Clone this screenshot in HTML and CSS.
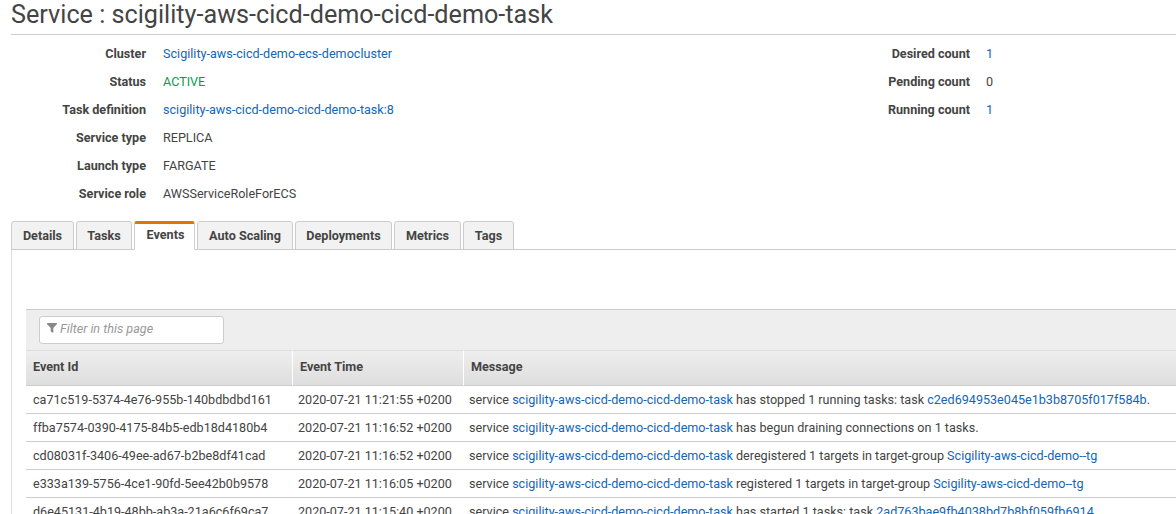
FILE: index.html
```html
<!DOCTYPE html>
<html>
<head>
  <title>Service : scigility-aws-cicd-demo-cicd-demo-task</title>
  <link rel="stylesheet" href="styles.css">
</head>
<body>
  <h1 class="page-title">Service : scigility-aws-cicd-demo-cicd-demo-task</h1>

  <div class="summary">
    <dl class="props props-left">
      <div class="prop"><dt>Cluster</dt><dd><a href="#">Scigility-aws-cicd-demo-ecs-democluster</a></dd></div>
      <div class="prop"><dt>Status</dt><dd class="active">ACTIVE</dd></div>
      <div class="prop"><dt>Task definition</dt><dd><a href="#">scigility-aws-cicd-demo-cicd-demo-task:8</a></dd></div>
      <div class="prop"><dt>Service type</dt><dd>REPLICA</dd></div>
      <div class="prop"><dt>Launch type</dt><dd>FARGATE</dd></div>
      <div class="prop"><dt>Service role</dt><dd>AWSServiceRoleForECS</dd></div>
    </dl>
    <dl class="props props-right">
      <div class="prop"><dt>Desired count</dt><dd><a href="#">1</a></dd></div>
      <div class="prop"><dt>Pending count</dt><dd>0</dd></div>
      <div class="prop"><dt>Running count</dt><dd><a href="#">1</a></dd></div>
    </dl>
  </div>

  <div class="tabs">
    <div class="tab tab-details">Details</div>
    <div class="tab tab-tasks">Tasks</div>
    <div class="tab tab-events active-tab">Events</div>
    <div class="tab tab-scaling">Auto Scaling</div>
    <div class="tab tab-deployments">Deployments</div>
    <div class="tab tab-metrics">Metrics</div>
    <div class="tab tab-tags">Tags</div>
  </div>

  <div class="panel">
    <div class="filter-bar">
      <div class="filter-box">
        <svg class="filter-icon" width="10" height="10" viewBox="0 0 10 10"><path d="M0 0h10v1L6.3 5v5L3.7 8.4V5L0 1z"/></svg>
        <span>Filter in this page</span>
      </div>
    </div>
    <table class="events">
      <thead>
        <tr>
          <th class="col-id">Event Id</th>
          <th class="col-time">Event Time</th>
          <th>Message</th>
        </tr>
      </thead>
      <tbody>
        <tr>
          <td>ca71c519-5374-4e76-955b-140bdbdbd161</td>
          <td>2020-07-21 11:21:55 +0200</td>
          <td>service <a href="#">scigility-aws-cicd-demo-cicd-demo-task</a> has stopped 1 running tasks: task <a href="#">c2ed694953e045e1b3b8705f017f584b</a>.</td>
        </tr>
        <tr>
          <td>ffba7574-0390-4175-84b5-edb18d4180b4</td>
          <td>2020-07-21 11:16:52 +0200</td>
          <td>service <a href="#">scigility-aws-cicd-demo-cicd-demo-task</a> has begun draining connections on 1 tasks.</td>
        </tr>
        <tr>
          <td>cd08031f-3406-49ee-ad67-b2be8df41cad</td>
          <td>2020-07-21 11:16:52 +0200</td>
          <td>service <a href="#">scigility-aws-cicd-demo-cicd-demo-task</a> deregistered 1 targets in target-group <a href="#">Scigility-aws-cicd-demo--tg</a></td>
        </tr>
        <tr>
          <td>e333a139-5756-4ce1-90fd-5ee42b0b9578</td>
          <td>2020-07-21 11:16:05 +0200</td>
          <td>service <a href="#">scigility-aws-cicd-demo-cicd-demo-task</a> registered 1 targets in target-group <a href="#">Scigility-aws-cicd-demo--tg</a></td>
        </tr>
        <tr>
          <td>d6e45131-4b19-48bb-ab3a-21a6c6f69ca7</td>
          <td>2020-07-21 11:15:40 +0200</td>
          <td>service <a href="#">scigility-aws-cicd-demo-cicd-demo-task</a> has started 1 tasks: task <a href="#">2ad763bae9fb4038bd7b8bf059fb6914</a></td>
        </tr>
      </tbody>
    </table>
  </div>
</body>
</html>
```

FILE: styles.css
```css
html, body {
  height: 514px;
  overflow: hidden;
}

body {
  margin: 0;
  padding-left: 11px;
  background-color: #fff;
  color: #444;
  font-family: Roboto, "Liberation Sans", sans-serif;
  font-size: 12.6px;
}

a {
  color: #1166bb;
  text-decoration: none;
}

.page-title {
  margin: 0;
  height: 34px;
  border-bottom: 1px solid #ccc;
  font-size: 25.2px;
  font-weight: 400;
  line-height: 30px;
  color: #444;
}

.summary {
  display: flex;
  height: 186px;
}

.props {
  margin: 5px 0 0;
}

.props-left {
  width: 875px;
}

.prop {
  display: flex;
  height: 28px;
  line-height: 28px;
}

.prop dt {
  font-weight: 700;
  text-align: right;
  white-space: nowrap;
}

.prop dd {
  margin: 0;
}

.props-left dt {
  width: 135px;
  margin-right: 17px;
}

.props-right dt {
  width: 84px;
  margin-right: 16px;
}

.active {
  color: #0a9a50;
}

.tabs {
  display: flex;
  gap: 2px;
  height: 29px;
  border-bottom: 1px solid #ccc;
  box-sizing: border-box;
}

.tab {
  box-sizing: border-box;
  height: 29px;
  border: 1px solid #ccc;
  border-radius: 3px 3px 0 0;
  background-color: #f2f2f2;
  font-weight: 700;
  line-height: 28px;
  text-align: center;
}

.tab-details { width: 63px; }
.tab-tasks { width: 56px; }
.tab-events { width: 61px; }
.tab-scaling { width: 96px; }
.tab-deployments { width: 97px; }
.tab-metrics { width: 67px; }
.tab-tags { width: 51px; }

.active-tab {
  padding-left: 2px;
  border-top: 3px solid #dd7700;
  border-bottom-color: #fff;
  background-color: #fff;
  line-height: 21px;
}

.panel {
  border-left: 1px solid #ddd;
  padding: 59px 0 0 14px;
}

.filter-bar {
  box-sizing: border-box;
  height: 41px;
  padding: 6px 13px;
  border-top: 1px solid #ccc;
  background-color: #eee;
}

.filter-box {
  display: flex;
  align-items: center;
  gap: 3px;
  box-sizing: border-box;
  width: 185px;
  height: 28px;
  padding: 0 0 4px 7px;
  border: 1px solid #ccc;
  border-radius: 3px;
  background-color: #fff;
  color: #999;
  font-style: italic;
}

.filter-icon {
  fill: #888;
}

.events {
  width: 1150px;
  border-collapse: separate;
  border-spacing: 0;
  table-layout: fixed;
}

.col-id {
  width: 266px;
}

.col-time {
  width: 171px;
}

.events th {
  box-sizing: border-box;
  height: 36px;
  padding: 0 7px 4px;
  border-top: 1px solid #ddd;
  border-bottom: 1px solid #ccc;
  border-left: 1px solid #fff;
  background: linear-gradient(#eeeeee, #dedede);
  font-weight: 700;
  text-align: left;
}

.events th.col-id {
  border-left: 0;
}

.events td {
  box-sizing: border-box;
  height: 28px;
  padding: 0 6px;
  border-bottom: 1px solid #ccc;
  white-space: nowrap;
}

.events td:first-child {
  padding-left: 7px;
}
```
